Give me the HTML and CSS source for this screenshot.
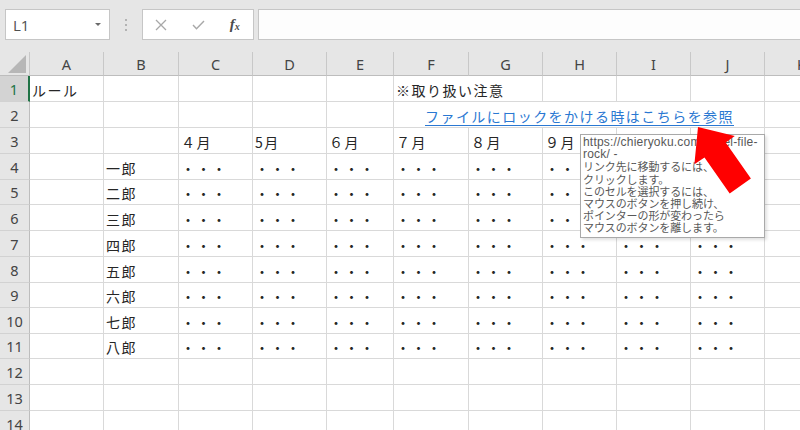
FILE: index.html
```html
<!DOCTYPE html>
<html lang="ja">
<head>
<meta charset="utf-8">
<title>Sheet</title>
<link rel="stylesheet" href="styles.css">
</head>
<body>
<div class="fbar">
  <div class="namebox"><span class="ref">L1</span><span class="dd"></span></div>
  <div class="grip"><i></i><i></i><i></i></div>
  <div class="fxbox">
    <span class="slot"><svg width="12" height="12" viewBox="0 0 12 12"><path d="M1 1L11 11M11 1L1 11" stroke="#a8a8a8" stroke-width="1.3" fill="none"/></svg></span>
    <span class="slot"><svg width="13" height="10" viewBox="0 0 13 10"><path d="M1 5L4.5 8.8L12 1" stroke="#a8a8a8" stroke-width="1.4" fill="none"/></svg></span>
    <span class="slot"><span class="fx">f<sub>x</sub></span></span>
  </div>
  <div class="finput"></div>
</div>
<div class="sheet">
  <div class="grid">
    <div class="corner"><span class="tri"></span></div>
    <div class="ch">A</div><div class="ch">B</div><div class="ch">C</div><div class="ch">D</div><div class="ch">E</div><div class="ch">F</div><div class="ch">G</div><div class="ch">H</div><div class="ch">I</div><div class="ch">J</div><div class="ch">K</div>

    <div class="rh sel">1</div>
    <div class="c">ルール</div><div class="c"></div><div class="c"></div><div class="c"></div><div class="c"></div>
    <div class="c span2">※取り扱い注意</div><div class="c"></div><div class="c"></div><div class="c"></div><div class="c"></div>

    <div class="rh">2</div>
    <div class="c"></div><div class="c"></div><div class="c"></div><div class="c"></div><div class="c"></div>
    <div class="c span5 center"><span class="link">ファイルにロックをかける時はこちらを参照</span></div><div class="c"></div>

    <div class="rh">3</div>
    <div class="c"></div><div class="c"></div><div class="c">４月</div><div class="c">5月</div><div class="c">６月</div><div class="c">７月</div><div class="c">８月</div><div class="c">９月</div><div class="c"></div><div class="c"></div><div class="c"></div>

    <div class="rh">4</div>
    <div class="c"></div><div class="c">一郎</div><div class="c">・・・</div><div class="c">・・・</div><div class="c">・・・</div><div class="c">・・・</div><div class="c">・・・</div><div class="c">・・・</div><div class="c">・・・</div><div class="c">・・・</div><div class="c"></div>

    <div class="rh">5</div>
    <div class="c"></div><div class="c">二郎</div><div class="c">・・・</div><div class="c">・・・</div><div class="c">・・・</div><div class="c">・・・</div><div class="c">・・・</div><div class="c">・・・</div><div class="c">・・・</div><div class="c">・・・</div><div class="c"></div>

    <div class="rh">6</div>
    <div class="c"></div><div class="c">三郎</div><div class="c">・・・</div><div class="c">・・・</div><div class="c">・・・</div><div class="c">・・・</div><div class="c">・・・</div><div class="c">・・・</div><div class="c">・・・</div><div class="c">・・・</div><div class="c"></div>

    <div class="rh">7</div>
    <div class="c"></div><div class="c">四郎</div><div class="c">・・・</div><div class="c">・・・</div><div class="c">・・・</div><div class="c">・・・</div><div class="c">・・・</div><div class="c">・・・</div><div class="c">・・・</div><div class="c">・・・</div><div class="c"></div>

    <div class="rh">8</div>
    <div class="c"></div><div class="c">五郎</div><div class="c">・・・</div><div class="c">・・・</div><div class="c">・・・</div><div class="c">・・・</div><div class="c">・・・</div><div class="c">・・・</div><div class="c">・・・</div><div class="c">・・・</div><div class="c"></div>

    <div class="rh">9</div>
    <div class="c"></div><div class="c">六郎</div><div class="c">・・・</div><div class="c">・・・</div><div class="c">・・・</div><div class="c">・・・</div><div class="c">・・・</div><div class="c">・・・</div><div class="c">・・・</div><div class="c">・・・</div><div class="c"></div>

    <div class="rh">10</div>
    <div class="c"></div><div class="c">七郎</div><div class="c">・・・</div><div class="c">・・・</div><div class="c">・・・</div><div class="c">・・・</div><div class="c">・・・</div><div class="c">・・・</div><div class="c">・・・</div><div class="c">・・・</div><div class="c"></div>

    <div class="rh">11</div>
    <div class="c"></div><div class="c">八郎</div><div class="c">・・・</div><div class="c">・・・</div><div class="c">・・・</div><div class="c">・・・</div><div class="c">・・・</div><div class="c">・・・</div><div class="c">・・・</div><div class="c">・・・</div><div class="c"></div>

    <div class="rh">12</div>
    <div class="c"></div><div class="c"></div><div class="c"></div><div class="c"></div><div class="c"></div><div class="c"></div><div class="c"></div><div class="c"></div><div class="c"></div><div class="c"></div><div class="c"></div>

    <div class="rh">13</div>
    <div class="c"></div><div class="c"></div><div class="c"></div><div class="c"></div><div class="c"></div><div class="c"></div><div class="c"></div><div class="c"></div><div class="c"></div><div class="c"></div><div class="c"></div>

    <div class="rh">14</div>
    <div class="c"></div><div class="c"></div><div class="c"></div><div class="c"></div><div class="c"></div><div class="c"></div><div class="c"></div><div class="c"></div><div class="c"></div><div class="c"></div><div class="c"></div>
  </div>

  <div class="tip">
    <div class="tip-url">https://chieryoku.com/excel-file-</div>
    <div class="tip-url">rock/ -</div>
    <div>リンク先に移動するには、</div>
    <div>クリックします。</div>
    <div>このセルを選択するには、</div>
    <div>マウスのボタンを押し続け、</div>
    <div>ポインターの形が変わったら</div>
    <div>マウスのボタンを離します。</div>
  </div>

  <svg class="arrow" width="120" height="110" viewBox="0 0 120 110">
    <polygon points="18,27 54.8,36.1 45.7,42.4 70.9,78.5 49.7,93.5 24.5,57.4 14.4,64.2" fill="#ff0000"/>
  </svg>
</div>
</body>
</html>
```

FILE: styles.css
```css
html, body {
  margin: 0;
  padding: 0;
}
body {
  width: 800px;
  height: 430px;
  overflow: hidden;
  background: #e6e6e6;
  font-family: "Noto Sans CJK JP", "Noto Sans", sans-serif;
}

/* formula bar */
.fbar {
  height: 52px;
  box-sizing: border-box;
  padding: 9px 0 0 5px;
  display: flex;
  align-items: flex-start;
  background: #e6e6e6;
}
.namebox {
  width: 105px;
  height: 31px;
  box-sizing: border-box;
  border: 1px solid #c6c6c6;
  background: #fff;
  display: flex;
  align-items: center;
  padding-left: 7px;
}
.ref {
  font-family: "Open Sans", "Noto Sans", sans-serif;
  font-size: 15px;
  color: #505050;
  line-height: 1;
  padding-top: 2px;
}
.dd {
  margin-left: auto;
  margin-right: 8px;
  width: 0;
  height: 0;
  border-left: 3px solid transparent;
  border-right: 3px solid transparent;
  border-top: 3px solid #6a6a6a;
}
.grip {
  width: 32px;
  height: 31px;
  display: flex;
  flex-direction: column;
  align-items: center;
  justify-content: center;
  gap: 3px;
}
.grip i {
  display: block;
  width: 2px;
  height: 2px;
  background: #b3b3b3;
}
.fxbox {
  width: 112px;
  height: 31px;
  box-sizing: border-box;
  border: 1px solid #c6c6c6;
  background: #fff;
  display: flex;
}
.slot {
  flex: 1;
  display: flex;
  align-items: center;
  justify-content: center;
}
.fx {
  font-family: "Liberation Serif", serif;
  font-style: italic;
  font-weight: bold;
  font-size: 15px;
  color: #4a4a4a;
  line-height: 1;
}
.fx sub {
  font-size: 10px;
  vertical-align: -1px;
}
.finput {
  flex: 1;
  margin-left: 4px;
  height: 31px;
  box-sizing: border-box;
  border: 1px solid #c6c6c6;
  border-right: none;
  background: #fdfdfd;
}

/* sheet */
.sheet {
  position: relative;
  background: #fff;
}
.grid {
  display: grid;
  grid-template-columns: 30px 74px 75px 74px 74px 67px 75px 74px 74px 74px 74px 74px;
  grid-template-rows: 24px 26px 26px 26px 26px 25px 26px 26px 26px 25px 26px 25px 26px 26px 26px;
  width: 839px;
}
.grid > div {
  box-sizing: border-box;
  min-width: 0;
}
.corner {
  background: #e6e6e6;
  border-right: 1px solid #c8c8c8;
  border-bottom: 1px solid #bdbdbd;
  display: flex;
  justify-content: flex-end;
  align-items: flex-end;
  padding: 0 3px 2px 0;
}
.tri {
  width: 18px;
  height: 18px;
  background: #b7b7b7;
  clip-path: polygon(100% 0, 100% 100%, 0 100%);
}
.ch {
  background: #e6e6e6;
  border-right: 1px solid #c8c8c8;
  border-bottom: 1px solid #bdbdbd;
  display: flex;
  align-items: center;
  justify-content: center;
  font-family: "Noto Sans", sans-serif;
  font-size: 14.5px;
  color: #444;
  line-height: 1;
  padding-top: 1px;
}
.rh {
  background: #e6e6e6;
  border-right: 1px solid #bdbdbd;
  border-bottom: 1px solid #d2d2d2;
  display: flex;
  align-items: center;
  justify-content: center;
  font-family: "Noto Sans", sans-serif;
  font-size: 14.5px;
  color: #444;
  line-height: 1;
  padding-top: 1px;
}
.rh.sel {
  background: #d3d3d3;
  color: #217346;
  border-right: 2px solid #217346;
}
.c {
  border-right: 1px solid #d9d9d9;
  border-bottom: 1px solid #d9d9d9;
  display: flex;
  align-items: center;
  padding: 2px 0 0 2px;
  font-size: 14px;
  letter-spacing: 1.5px;
  color: #262626;
  white-space: nowrap;
  overflow: hidden;
  line-height: 1;
}
.span2 {
  grid-column: span 2;
}
.span5 {
  grid-column: span 5;
}
.center {
  justify-content: center;
  padding-left: 0;
}
.link {
  color: #2a78d2;
  text-decoration: underline;
  text-underline-offset: 3px;
  text-decoration-thickness: 1px;
  letter-spacing: 1.45px;
  margin-right: -1px;
}

/* hyperlink tooltip */
.tip {
  position: absolute;
  left: 580px;
  top: 82px;
  width: 185px;
  height: 104px;
  box-sizing: border-box;
  background: #fff;
  border: 1px solid #a9a9a9;
  box-shadow: 2px 2px 3px rgba(0, 0, 0, 0.12);
  padding: 1px 0 0 2px;
  font-family: "Noto Sans CJK JP", sans-serif;
  font-size: 11px;
  letter-spacing: -0.1px;
  line-height: 12.2px;
  color: #585858;
  white-space: nowrap;
  overflow: hidden;
}
.tip-url {
  font-family: "Liberation Sans", "Noto Sans CJK JP", sans-serif;
  font-size: 12px;
  letter-spacing: 0.2px;
}

.arrow {
  position: absolute;
  left: 680px;
  top: 48px;
}
```
